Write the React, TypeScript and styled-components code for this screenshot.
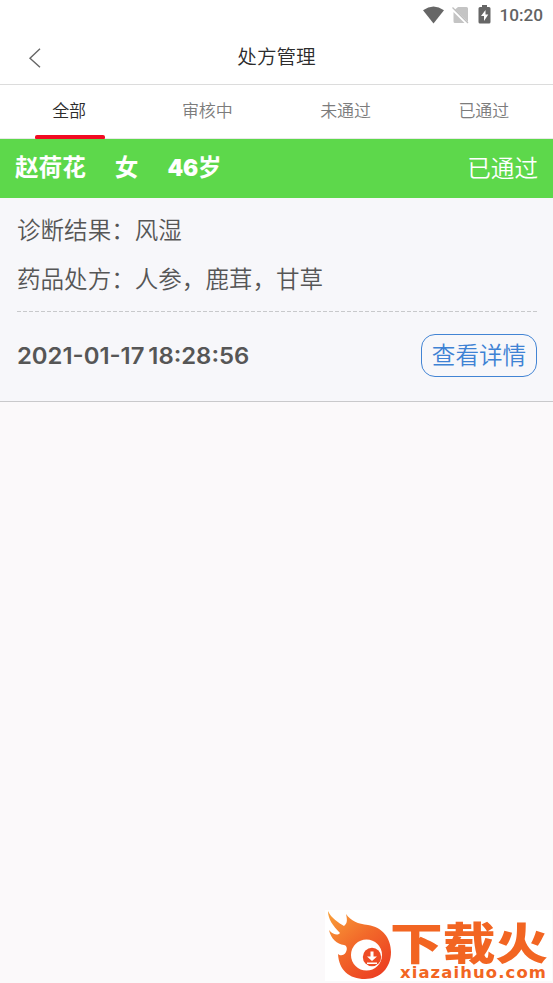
import React from "react";
import styled, { createGlobalStyle } from "styled-components";

const GlobalStyle = createGlobalStyle`
  * { box-sizing: border-box; }
  html, body { margin: 0; padding: 0; background: #fbf9fa; }
  body { font-family: Roboto, "Noto Sans CJK SC", sans-serif; overflow: hidden; }
`;

const Screen = styled.div`
  display: flex;
  flex-direction: column;
  width: 553px;
  height: 983px;
  background: #fbf9fa;
  font-family: "Noto Sans CJK SC", sans-serif;
`;

const StatusBar = styled.div`
  display: flex;
  align-items: center;
  justify-content: flex-end;
  height: 31px;
  padding: 0 10px 2px 0;
  background: #fff;
`;

const Clock = styled.span`
  margin-left: 8px;
  padding-top: 1px;
  font: 500 17.2px/20px Roboto, sans-serif;
  color: #636363;
`;

const StatusIcon = styled.svg<{ $gap?: number }>`
  display: block;
  margin-left: ${(p) => p.$gap ?? 0}px;
`;

const Header = styled.header`
  display: grid;
  grid-template-columns: 70px 1fr 70px;
  align-items: center;
  height: 54px;
  padding-bottom: 3px;
  background: #fff;
  border-bottom: 1px solid #dcdcdc;
`;

const BackButton = styled.button`
  display: flex;
  padding: 3px 0 0 28px;
  border: 0;
  background: none;
`;

const Title = styled.h1`
  margin: 0;
  text-align: center;
  font-size: 19.6px;
  line-height: 28px;
  font-weight: 350;
  color: #2c2c2c;
`;

const Tabs = styled.nav`
  display: grid;
  grid-template-columns: repeat(4, 1fr);
  height: 54px;
  background: #fff;
  border-bottom: 1px solid #e8e8e8;
`;

const Tab = styled.div<{ $active?: boolean }>`
  display: flex;
  flex-direction: column;
  align-items: center;
  justify-content: space-between;
  padding-top: 12px;
  font-size: 17px;
  line-height: 25px;
  font-weight: 350;
  color: ${(p) => (p.$active ? "#2c2c2c" : "#7c7c7c")};
`;

const Indicator = styled.div`
  width: 70px;
  height: 4px;
  margin: 0 0 -1px 1px;
  border-radius: 2px 2px 1px 1px;
  background: #f10b22;
`;

const Card = styled.article`
  height: 263px;
  background: #f7f7fa;
  border-bottom: 1px solid #c9c9cb;
`;

const CardHeader = styled.div`
  display: flex;
  align-items: center;
  height: 59px;
  padding: 0 15px 4px;
  background: #5dd84b;
  color: #fff;
  font-size: 23.6px;
  line-height: 36px;
`;

const Patient = styled.div`
  display: flex;
  flex: 1;
  gap: 29px;
  font-weight: 700;
`;

const Status = styled.span`
  font-weight: 350;
`;

const Age = styled.span`
  display: flex;
  align-items: baseline;
`;

const AgeNumber = styled.span`
  font-family: Inter, sans-serif;
  font-weight: 900;
  font-size: 22.5px;
  letter-spacing: -0.2px;
`;

const Details = styled.div`
  display: flex;
  flex-direction: column;
  gap: 13px;
  height: 114px;
  margin: 0 16px 0 17px;
  padding-top: 13px;
`;

const Detail = styled.div`
  font-size: 23.55px;
  line-height: 36px;
  font-weight: 350;
  color: #565656;
  white-space: nowrap;
`;

const DashedLine = styled.svg`
  display: block;
  margin: -1px 16px 0 17px;
`;

const CardFooter = styled.div`
  display: flex;
  align-items: center;
  justify-content: space-between;
  height: 43px;
  margin: 22px 16px 0 17px;
`;

const Time = styled.time`
  font-family: Inter, sans-serif;
  font-size: 22.3px;
  line-height: 30px;
  font-weight: 600;
  word-spacing: -2px;
  transform: scaleX(1.07);
  transform-origin: left center;
  color: #565656;
  white-space: nowrap;
`;

const DetailButton = styled.button`
  width: 116px;
  height: 43px;
  padding: 0 0 3px;
  border: 1px solid #4284d4;
  border-radius: 14px;
  background: transparent;
  color: #3e82d4;
  font: 350 23.6px/34px "Noto Sans CJK SC", sans-serif;
  white-space: nowrap;
`;

const LogoPanel = styled.div`
  width: 227px;
  height: 71px;
  margin: auto 1px 2px auto;
  background: #fff;
`;

const tabs = ["全部", "审核中", "未通过", "已通过"];

function SiteLogo() {
  return (
    <svg width="227" height="71" viewBox="0 0 227 71" display="block">
      <defs>
        <linearGradient id="flame" x1="0" y1="0" x2="0.75" y2="1">
          <stop offset="0" stopColor="#f9a039" />
          <stop offset="0.5" stopColor="#f26a2a" />
          <stop offset="1" stopColor="#ec3f22" />
        </linearGradient>
      </defs>
      <path
        d="M3 1C6 8 14 13 19 16C23 13 22 9 21 4C26 11 33 14 43 15C57 17 66 28 66 42C66 58 55 69 40 69C24 69 14 60 13 44C15 46 19 46 21 42C23 38 21 35 19 35C12 34 6 29 4 20C9 26 14 25 15 23C8 16 3 9 3 1Z"
        fill="url(#flame)"
      />
      <circle cx="41.5" cy="45" r="15.5" fill="#fff" />
      <circle cx="47" cy="47" r="9.2" fill="#ee4c25" />
      <path d="M45.5 41.5h3v5h3.5l-5 4.5-5-4.5h3.5zM42 52.5h10v1.6h-10z" fill="#fff" />
      <g fill="#f26522">
        <text x="65" y="49.5" fontSize="44" fontWeight="900" textLength="158" lengthAdjust="spacingAndGlyphs" fontFamily="Noto Sans CJK SC, sans-serif">
          下载火
        </text>
        <text x="75" y="68" fontSize="15" fontWeight="700" textLength="147" letterSpacing="1" lengthAdjust="spacingAndGlyphs" fontFamily="DejaVu Sans, sans-serif">
          xiazaihuo.com
        </text>
      </g>
    </svg>
  );
}

export default function App() {
  return (
    <>
      <GlobalStyle />
      <Screen>
        <StatusBar>
          <StatusIcon width="21" height="18" viewBox="0 0 21 18">
            <path d="M0 4.2Q10.5-3 21 4.2L10.5 17.5Z" fill="#666" />
          </StatusIcon>
          <StatusIcon $gap={8} width="17" height="18" viewBox="0 0 17 18">
            <path d="M6 1H14.5Q16 1 16 2.5V16L3 3.5ZM1.5 6L12.5 17H3Q1.5 17 1.5 15.5Z" fill="#c4c4c4" />
            <path d="M.5 1.5L16 17" stroke="#bdbdbd" strokeWidth="1.3" />
          </StatusIcon>
          <StatusIcon $gap={9} width="13" height="19" viewBox="0 0 13 19">
            <path d="M4 0H9V2H11Q12.5 2 12.5 3.5V17Q12.5 18.5 11 18.5H2Q.5 18.5 .5 17V3.5Q.5 2 2 2H4Z" fill="#666" />
            <path d="M7.5 5L3 11H6V16L10.3 9.4H7.5Z" fill="#fff" />
          </StatusIcon>
          <Clock>10:20</Clock>
        </StatusBar>
        <Header>
          <BackButton aria-label="返回">
            <svg width="14" height="20" viewBox="0 0 14 20" fill="none" stroke="#666" strokeWidth="1.4">
              <path d="M12 .8L2 10.2L12 19.3" />
            </svg>
          </BackButton>
          <Title>处方管理</Title>
        </Header>
        <Tabs>
          {tabs.map((label, i) => (
            <Tab key={label} $active={i === 0}>
              {label}
              {i === 0 && <Indicator />}
            </Tab>
          ))}
        </Tabs>
        <Card>
          <CardHeader>
            <Patient>
              <span>赵荷花</span>
              <span>女</span>
              <Age>
                <AgeNumber>46</AgeNumber>岁
              </Age>
            </Patient>
            <Status>已通过</Status>
          </CardHeader>
          <Details>
            <Detail>诊断结果：风湿</Detail>
            <Detail>药品处方：人参，鹿茸，甘草</Detail>
          </Details>
          <DashedLine width="520" height="1" viewBox="0 0 520 1">
            <path d="M0 .5H520" stroke="#c8c9cb" strokeDasharray="4 2" />
          </DashedLine>
          <CardFooter>
            <Time>2021-01-17 18:28:56</Time>
            <DetailButton>查看详情</DetailButton>
          </CardFooter>
        </Card>
        <LogoPanel>
          <SiteLogo />
        </LogoPanel>
      </Screen>
    </>
  );
}
